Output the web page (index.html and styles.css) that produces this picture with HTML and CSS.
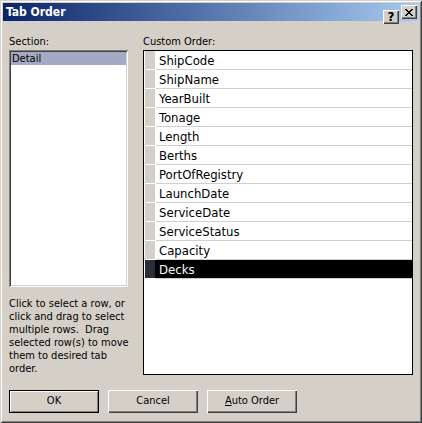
FILE: index.html
```html
<!DOCTYPE html>
<html>
<head>
<meta charset="utf-8">
<link rel="stylesheet" href="styles.css">
</head>
<body>
<div class="window">
  <div class="titlebar">
    <span class="title">Tab Order</span>
    <span class="cap-btn help">?</span>
    <span class="cap-btn close">
      <svg width="8" height="7" viewBox="0 0 8 7" shape-rendering="crispEdges"><path d="M0 0h2v1h-2zM6 0h2v1h-2zM1 1h2v1h-2zM5 1h2v1h-2zM2 2h4v1h-4zM3 3h2v1h-2zM2 4h4v1h-4zM1 5h2v1h-2zM5 5h2v1h-2zM0 6h2v1h-2zM6 6h2v1h-2z" fill="#000"/></svg>
    </span>
  </div>
  <div class="content">
    <div class="main">
      <div class="col-left">
        <div class="label">Section:</div>
        <div class="section-box">
          <div class="section-item">Detail</div>
        </div>
        <div class="help">Click to select a row, or<br>click and drag to select<br>multiple rows.&nbsp; Drag<br>selected row(s) to move<br>them to desired tab<br>order.</div>
      </div>
      <div class="col-right">
        <div class="label">Custom Order:</div>
        <div class="order-list">
          <div class="row"><span class="sel"></span><span class="cell">ShipCode</span></div>
          <div class="row"><span class="sel"></span><span class="cell">ShipName</span></div>
          <div class="row"><span class="sel"></span><span class="cell">YearBuilt</span></div>
          <div class="row"><span class="sel"></span><span class="cell">Tonage</span></div>
          <div class="row"><span class="sel"></span><span class="cell">Length</span></div>
          <div class="row"><span class="sel"></span><span class="cell">Berths</span></div>
          <div class="row"><span class="sel"></span><span class="cell">PortOfRegistry</span></div>
          <div class="row"><span class="sel"></span><span class="cell">LaunchDate</span></div>
          <div class="row"><span class="sel"></span><span class="cell">ServiceDate</span></div>
          <div class="row"><span class="sel"></span><span class="cell">ServiceStatus</span></div>
          <div class="row"><span class="sel"></span><span class="cell">Capacity</span></div>
          <div class="row selected"><span class="sel"></span><span class="cell">Decks</span></div>
        </div>
      </div>
    </div>
    <div class="buttons">
      <div class="btn default">OK</div>
      <div class="btn">Cancel</div>
      <div class="btn"><u>A</u>uto Order</div>
    </div>
  </div>
</div>
</body>
</html>
```

FILE: styles.css
```css
html, body {
  margin: 0;
  padding: 0;
  background: #d4d0c8;
}
body {
  font-family: "DejaVu Sans Condensed", "Liberation Sans", sans-serif;
  font-size: 11px;
  color: #000;
}
.window {
  box-sizing: border-box;
  width: 422px;
  height: 423px;
  padding: 3px 4px 3px 3px;
  background: #d4d0c8;
  box-shadow: inset 1px 1px #d4d0c8, inset -1px -1px #404040, inset 2px 2px #ffffff, inset -2px -2px #808080;
}
.titlebar {
  height: 18px;
  display: flex;
  align-items: center;
  padding-left: 3px;
  padding-right: 1px;
  background: linear-gradient(to right, #0a246a, #a6caf0);
}
.title {
  flex: 1;
  color: #fff;
  font-weight: bold;
  font-size: 12px;
  line-height: 18px;
}
.cap-btn {
  box-sizing: border-box;
  width: 16px;
  height: 14px;
  display: flex;
  align-items: center;
  justify-content: center;
  background: #d4d0c8;
  box-shadow: inset 1px 1px #ffffff, inset -1px -1px #404040, inset -2px -2px #808080;
}
.help.cap-btn {
  margin-right: 2px;
  font-weight: bold;
  font-size: 12px;
  font-family: "DejaVu Sans", sans-serif;
  line-height: 14px;
  padding-bottom: 1px;
}
.content {
  padding: 14px 5px 0 6px;
}
.main {
  display: flex;
  gap: 15px;
}
.label {
  line-height: 13px;
  height: 13px;
  margin-bottom: 2px;
}
.col-left {
  width: 119px;
}
.section-box {
  box-sizing: border-box;
  height: 237px;
  padding: 2px;
  background: #fff;
  box-shadow: inset 1px 1px #808080, inset -1px -1px #ffffff, inset 2px 2px #404040, inset -2px -2px #d4d0c8;
}
.section-item {
  height: 13px;
  line-height: 13px;
  padding-left: 1px;
  background: #a5aac4;
}
.help {
  margin-top: 10px;
  line-height: 13px;
  white-space: nowrap;
}
.col-right {
  width: 270px;
}
.order-list {
  box-sizing: border-box;
  height: 325px;
  border: 1px solid #000;
  padding-left: 1px;
  background: #fff;
}
.row {
  display: flex;
  height: 19px;
  font-size: 13px;
}
.sel {
  box-sizing: border-box;
  width: 11px;
  height: 18px;
  background: #d4d0c8;
  border-right: 1px solid #ffffff;
}
.cell {
  flex: 1;
  height: 17px;
  padding-top: 1px;
  line-height: 18px;
  padding-left: 3px;
  border-bottom: 1px solid #d0d0d0;
}
.row.selected .sel {
  background: #2b2e38;
  border-right-color: #000;
}
.row.selected .cell {
  background: #000;
  color: #fff;
}
.buttons {
  display: flex;
  gap: 9px;
  margin-top: 15px;
}
.btn {
  box-sizing: border-box;
  width: 90px;
  height: 23px;
  line-height: 22px;
  text-align: center;
  background: #d4d0c8;
  box-shadow: inset 1px 1px #ffffff, inset -1px -1px #404040, inset -2px -2px #808080;
}
.btn.default {
  border: 1px solid #000;
  line-height: 20px;
  box-shadow: inset 1px 1px #ffffff, inset -1px -1px #808080;
}
```
